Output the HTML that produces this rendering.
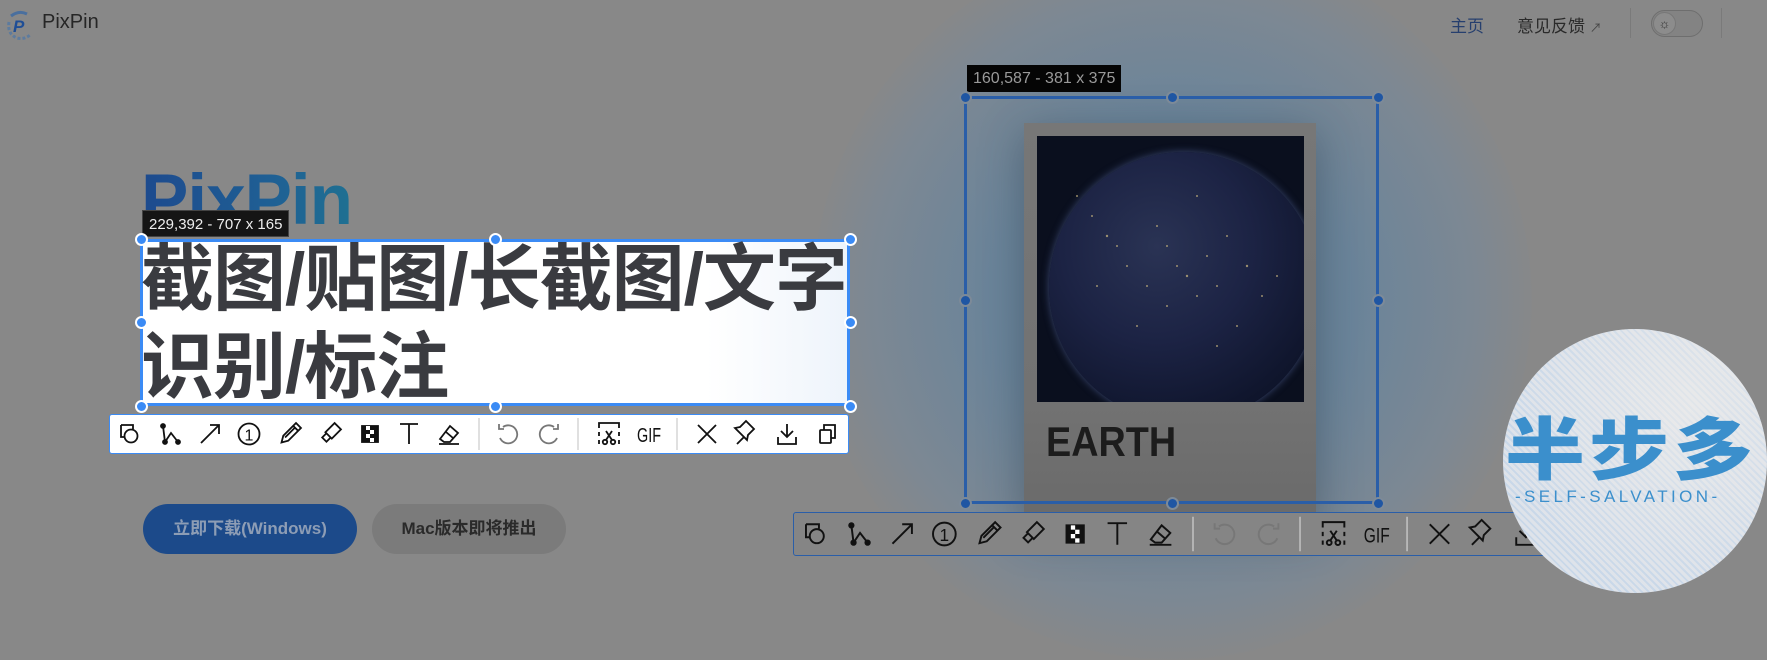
<!DOCTYPE html>
<html><head><meta charset="utf-8"><style>
*{margin:0;padding:0;box-sizing:border-box}
body{width:1767px;height:587px;overflow:hidden;background:#888;position:relative;font-family:"Liberation Sans","Noto Sans CJK SC",sans-serif}
.a{position:absolute}
.glow{left:812px;top:-60px;width:720px;height:720px;border-radius:50%;background:radial-gradient(circle,#5f7f9c 0%,#6a849a 35%,#7d8893 60%,rgba(136,136,136,0) 72%)}
.h{position:absolute;width:13px;height:13px;border-radius:50%;background:#3b8bf5;border:2px solid #fff;margin:-6.5px 0 0 -6.5px}
.h2{position:absolute;width:13px;height:13px;border-radius:50%;background:#1f56a3;border:2px solid #7d8a98;margin:-6.5px 0 0 -6.5px}
.lab{background:#151515;color:#eee;font-size:15px;line-height:27px;padding:0 6px;border:1px solid #444}
</style></head><body>
<div class="a glow"></div>
<!-- nav -->
<svg class="a" style="left:5px;top:10px" width="28" height="32" viewBox="0 0 28 32"><path d="M6 6 Q14 0 22 4" stroke="#4a6f9e" stroke-width="3" fill="none"/><path d="M4 12 Q2 24 12 28 Q20 30 26 24" stroke="#5d7b9e" stroke-width="3" fill="none" stroke-dasharray="3 2"/><text x="8" y="22" font-size="17" font-weight="bold" font-style="italic" fill="#1f4e96" font-family="Liberation Sans">P</text></svg>
<div class="a" style="left:42px;top:11px;font-size:20px;color:#262626">PixPin</div>
<div class="a" style="left:1450px;top:12px;font-size:17px;color:#263f6e">主页</div>
<div class="a" style="left:1517px;top:12px;font-size:17px;color:#2a2a2a">意见反馈 <span style="font-size:12px;color:#444">↗</span></div>
<div class="a" style="left:1630px;top:8px;width:1px;height:30px;background:#7a7a7a"></div>
<div class="a" style="left:1651px;top:10px;width:52px;height:27px;border-radius:14px;border:1px solid #6e6e6e;background:#838383"></div>
<div class="a" style="left:1653px;top:12px;width:23px;height:23px;border-radius:50%;background:#8c8c8c;border:1px solid #777;color:#333;font-size:13px;text-align:center;line-height:22px">☼</div>
<div class="a" style="left:1721px;top:8px;width:1px;height:30px;background:#7a7a7a"></div>

<!-- big PixPin -->
<div class="a" style="left:141px;top:160px;font-size:71px;font-weight:bold;letter-spacing:-1px;background:linear-gradient(90deg,#1d4a8e,#1f5f94 60%,#1f7092);-webkit-background-clip:text;color:transparent">PixPin</div>
<!-- white selection -->
<div class="a" style="left:140px;top:239px;width:710px;height:167px;background:linear-gradient(90deg,#fff 80%,#eef4fb);border:3px solid #3b8bf5"></div>
<div class="a" style="left:141px;top:236px;font-size:73px;font-weight:bold;color:#3a3b40;line-height:88px;letter-spacing:-1px;white-space:nowrap">截图/贴图/长截图/文字<br>识别/标注</div>
<div class="a lab" style="left:142px;top:210px;height:27px">229,392 - 707 x 165</div>
<div class="h" style="left:141px;top:239px"></div><div class="h" style="left:495px;top:239px"></div><div class="h" style="left:850px;top:239px"></div>
<div class="h" style="left:141px;top:322px"></div><div class="h" style="left:850px;top:322px"></div>
<div class="h" style="left:141px;top:406px"></div><div class="h" style="left:495px;top:406px"></div><div class="h" style="left:850px;top:406px"></div>

<!-- toolbar left -->
<div class="a" style="left:109px;top:414px;width:740px;height:40px;background:#fff;border:1.5px solid #3b8bf5;border-radius:3px"></div>
<svg class="a" id="tb" style="left:109px;top:414px" width="740" height="40" viewBox="0 0 740 40" fill="none" stroke="#111" stroke-width="1.8">
<g transform="translate(21,20)"><path d="M-9-9h12v4"/><path d="M-9-9v12h4"/><circle cx="1" cy="2" r="6.5"/></g>
<g transform="translate(61,20)"><path d="M-7-8L-5 8 1-1 8 8"/><circle cx="-7" cy="-8" r="2" fill="#111"/><circle cx="-5" cy="8" r="2" fill="#111"/><circle cx="8" cy="8" r="2" fill="#111"/></g>
<g transform="translate(101,20)"><path d="M-9 9L9-9M0-9h9v9"/></g>
<g transform="translate(140,20)"><circle r="10.5"/><text x="-4.5" y="6.5" font-size="16" fill="#111" stroke="none" font-family="Liberation Sans">1</text></g>
<g transform="translate(181,20) rotate(45)"><path d="M-3.5-12h7v18l-3.5 6-3.5-6z"/><path d="M-3.5-8h7M-1-8v14"/></g>
<g transform="translate(221,20) rotate(45)"><path d="M-4.5-11h9v13h-9z"/><path d="M-3 2v6h6v-6"/></g>
<g transform="translate(261,20)"><rect x="-8" y="-8" width="16" height="16" fill="#111"/><rect x="-4" y="-8" width="4" height="4" fill="#fff" stroke="none"/><rect x="0" y="-4" width="4" height="4" fill="#fff" stroke="none"/><rect x="-4" y="0" width="4" height="4" fill="#fff" stroke="none"/><rect x="0" y="4" width="4" height="4" fill="#fff" stroke="none"/></g>
<g transform="translate(300,20)"><path d="M-9-10h18M0-10v20"/></g>
<g transform="translate(340,20)"><path d="M-10 10h20"/><path d="M-9 5l10-13 8 7-8 9h-6z"/><path d="M-3-2l7 6"/></g>
<g stroke="#ccc" stroke-width="1.2"><path d="M370 4v32M469 4v32M568 4v32"/></g>
<g transform="translate(399,20)" stroke="#777"><path d="M-5-7a9 9 0 1 1 -3 11"/><path d="M-9-10v5h5"/></g>
<g transform="translate(440,20)" stroke="#777"><path d="M5-7a9 9 0 1 0 3 11"/><path d="M9-10v5h-5"/></g>
<g transform="translate(500,20)"><path d="M-10-6v-5h20v5M-10-2v4M10-2v4M-10 6v4M10 6v4" /><circle cx="-4" cy="8" r="2.2"/><circle cx="4" cy="8" r="2.2"/><path d="M-3 6l6-9M3 6l-6-9"/></g>
<text x="528" y="28" font-size="20" fill="#111" stroke="none" font-family="Liberation Sans" textLength="24" lengthAdjust="spacingAndGlyphs">GIF</text>
<g transform="translate(598,20)"><path d="M-9-9L9 9M9-9L-9 9"/></g>
<g transform="translate(637,20)"><path d="M-9 10l7-7M-6-1l7 7 1-5 6-6-8-8-6 6-5 1z"/></g>
<g transform="translate(678,20)"><path d="M0-10v13M-6-3l6 6 6-6M-9 3v7h18v-7"/></g>
<g transform="translate(718,20)"><rect x="-7" y="-4" width="11" height="13" rx="1"/><path d="M-3-4v-5h11v13h-4"/></g>
</svg>

<!-- buttons -->
<div class="a" style="left:143px;top:504px;width:214px;height:50px;border-radius:25px;background:#1c4a8a;color:#8d9db5;font-size:17px;font-weight:bold;text-align:center;line-height:50px">立即下载(Windows)</div>
<div class="a" style="left:372px;top:504px;width:194px;height:50px;border-radius:25px;background:#7b7b7b;color:#2a2a2a;font-size:17px;font-weight:bold;text-align:center;line-height:50px">Mac版本即将推出</div>

<!-- card -->
<div class="a" style="left:1024px;top:123px;width:292px;height:400px;background:linear-gradient(180deg,#777 0%,#727272 70%,#6a6a6a);box-shadow:0 10px 40px rgba(40,50,60,.4)"></div>
<div class="a" style="left:1037px;top:136px;width:267px;height:266px;background:#0a0f1e;overflow:hidden">
<div class="a" style="left:12px;top:16px;width:270px;height:270px;border-radius:50%;background:radial-gradient(circle at 40% 35%,#2a3354 0%,#1c2344 40%,#0f152c 75%,#0b1020 100%);box-shadow:0 0 8px #3a4770"></div>
<svg class="a" style="left:0;top:0" width="267" height="266"><g fill="#c4b27e" opacity=".75"><circle cx="40" cy="60" r="1"/><circle cx="55" cy="80" r="1"/><circle cx="70" cy="100" r="1.2"/><circle cx="90" cy="130" r="1"/><circle cx="110" cy="150" r="1"/><circle cx="130" cy="170" r="1"/><circle cx="150" cy="140" r="1.2"/><circle cx="170" cy="120" r="1"/><circle cx="190" cy="100" r="1"/><circle cx="210" cy="130" r="1.2"/><circle cx="225" cy="160" r="1"/><circle cx="200" cy="190" r="1"/><circle cx="180" cy="210" r="1"/><circle cx="100" cy="190" r="1"/><circle cx="80" cy="110" r="1"/><circle cx="120" cy="90" r="1"/><circle cx="240" cy="140" r="1"/><circle cx="160" cy="60" r="1"/><circle cx="60" cy="150" r="1"/><circle cx="130" cy="110" r="1"/><circle cx="140" cy="130" r="1"/><circle cx="160" cy="160" r="1"/><circle cx="180" cy="150" r="1"/></g></svg>
</div>
<div class="a" style="left:1046px;top:418px;font-size:42px;font-weight:bold;color:#1c1c1c;transform:scaleX(0.9);transform-origin:0 0">EARTH</div>

<!-- selection right -->
<div class="a" style="left:964px;top:96px;width:415px;height:408px;border:3px solid #2a5ea8"></div>
<div class="a lab" style="left:967px;top:65px;height:27px;background:#050505;color:#9a9a9a;font-size:16px;border:none">160,587 - 381 x 375</div>
<div class="h2" style="left:965px;top:97px"></div><div class="h2" style="left:1172px;top:97px"></div><div class="h2" style="left:1378px;top:97px"></div>
<div class="h2" style="left:965px;top:300px"></div><div class="h2" style="left:1378px;top:300px"></div>
<div class="h2" style="left:965px;top:503px"></div><div class="h2" style="left:1172px;top:503px"></div><div class="h2" style="left:1378px;top:503px"></div>

<!-- toolbar bottom (dimmed) -->
<div class="a" style="left:793px;top:512px;width:800px;height:44px;background:#858585;border:1.5px solid #2a5ea8;border-radius:3px"></div>
<svg class="a" style="left:793px;top:512px" width="800" height="44" viewBox="0 0 740 40"><use href="#tb"/></svg>

<!-- circle logo -->
<div class="a" style="left:1503px;top:329px;width:264px;height:264px;border-radius:50%;overflow:hidden;background:repeating-linear-gradient(45deg,#e4e6ea 0 3px,#c9d8e8 3px 5px);">
<div class="a" style="left:0;top:0;width:100%;height:100%;background:radial-gradient(circle at 70% 30%,rgba(235,235,235,.7),rgba(200,215,235,.2) 70%)"></div>
<div class="a" style="left:2px;top:71px;width:262px;font-size:80px;font-weight:900;color:#3b8fcc;letter-spacing:4px;font-family:'Noto Sans CJK SC',sans-serif;line-height:90px;transform:scaleY(0.85);transform-origin:0 50%;white-space:nowrap">半步多</div>
<div class="a" style="left:12px;top:158px;font-size:17px;color:#3b8fcc;letter-spacing:3.4px;white-space:nowrap">-SELF-SALVATION-</div>
</div>
</body></html>
